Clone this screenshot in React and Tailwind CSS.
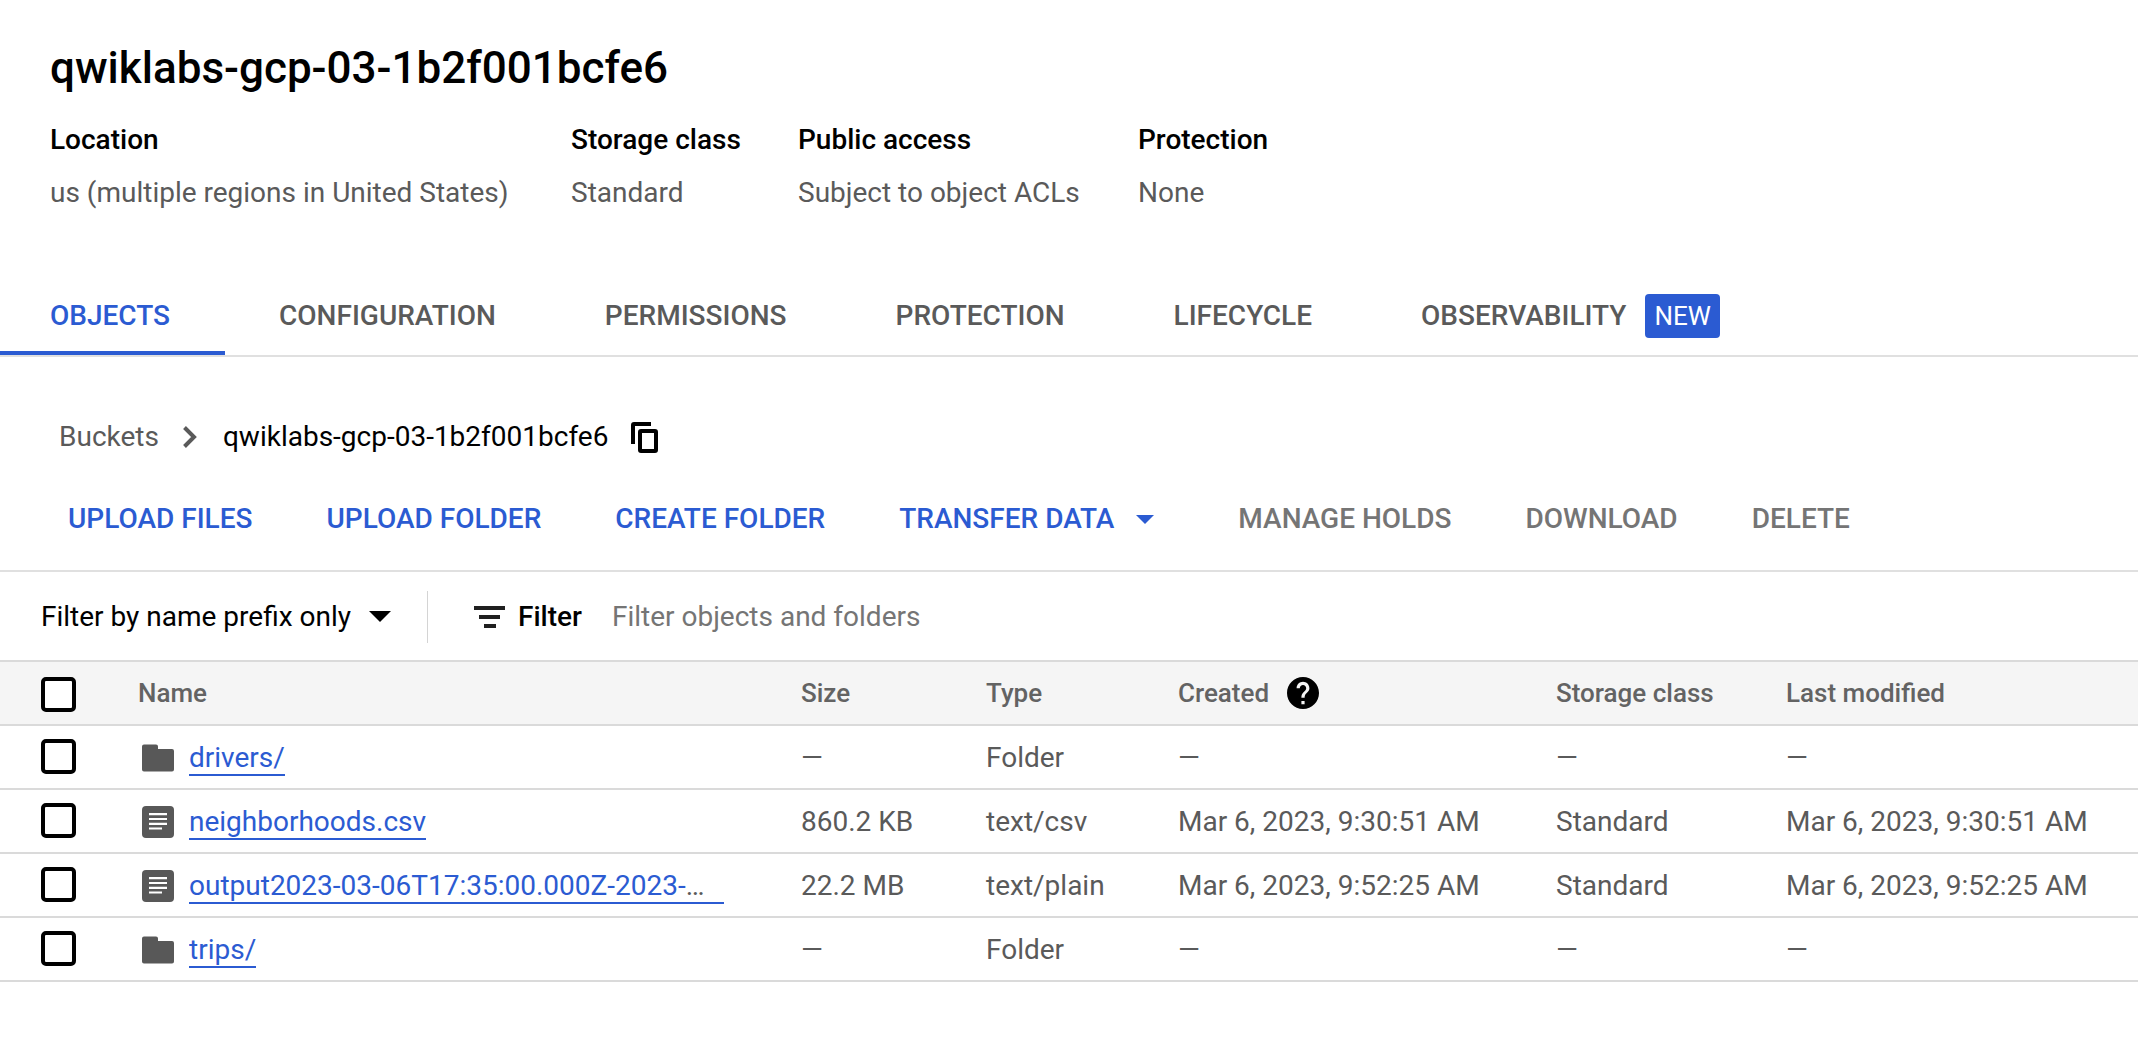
const details = [
  { label: 'Location', value: 'us (multiple regions in United States)' },
  { label: 'Storage class', value: 'Standard' },
  { label: 'Public access', value: 'Subject to object ACLs' },
  { label: 'Protection', value: 'None' },
];

const tabs = ['OBJECTS', 'CONFIGURATION', 'PERMISSIONS', 'PROTECTION', 'LIFECYCLE'];

const rows = [
  { name: 'drivers/', folder: true, size: '—', type: 'Folder', created: '—', storage: '—', modified: '—' },
  { name: 'neighborhoods.csv', size: '860.2 KB', type: 'text/csv', created: 'Mar 6, 2023, 9:30:51 AM', storage: 'Standard', modified: 'Mar 6, 2023, 9:30:51 AM' },
  { name: 'output2023-03-06T17:35:00.000Z-2023-', shortened: true, size: '22.2 MB', type: 'text/plain', created: 'Mar 6, 2023, 9:52:25 AM', storage: 'Standard', modified: 'Mar 6, 2023, 9:52:25 AM' },
  { name: 'trips/', folder: true, size: '—', type: 'Folder', created: '—', storage: '—', modified: '—' },
];

function FolderIcon() {
  return (
    <svg className="h-8 w-8 shrink-0" viewBox="0 0 32 32" fill="#585858" aria-hidden="true">
      <path d="M2 2.500H14a2 2 0 0 1 2 2V7H30a2 2 0 0 1 2 2V27.500a2 2 0 0 1-2 2H2a2 2 0 0 1-2-2V4.500a2 2 0 0 1 2-2z" />
    </svg>
  );
}

function FileIcon() {
  return (
    <svg className="h-8 w-8 shrink-0" viewBox="0 0 32 32" aria-hidden="true">
      <rect width="32" height="32" rx="4" fill="#585858" />
      <path d="M7 8.200h18M7 13h18M7 17.800h18M7 22.500h13" stroke="#fff" strokeWidth="2.200" />
    </svg>
  );
}

function CheckBox({ label }) {
  return (
    <input
      type="checkbox"
      aria-label={label}
      className="block h-[35px] w-[35px] appearance-none rounded-[5px] border-4 border-black bg-white checked:bg-black"
    />
  );
}

function Action({ children, disabled }) {
  return (
    <button
      type="button"
      disabled={disabled}
      className="flex items-center font-medium text-[#2b5bd2] disabled:text-[#757575]"
    >
      {children}
    </button>
  );
}

export default function App() {
  return (
    <main className="min-h-screen bg-white font-['Roboto',sans-serif] text-[28px] leading-9 whitespace-nowrap text-[#5a5a5a]">
      <header className="px-[50px] pt-10">
        <h1 className="text-[44px] leading-[56px] font-medium text-black">qwiklabs-gcp-03-1b2f001bcfe6</h1>
        <dl className="mt-[26px] grid grid-cols-[521px_227px_340px_auto]">
          {details.map((d) => (
            <div key={d.label}>
              <dt className="font-medium text-black">{d.label}</dt>
              <dd className="mt-[17px]">{d.value}</dd>
            </div>
          ))}
        </dl>
      </header>

      <nav className="mt-[66px] flex h-[80px] border-b-2 border-[#e0e0e0] font-medium">
        {tabs.map((t, i) => (
          <a
            key={t}
            href="#"
            className={
              i === 0
                ? 'flex items-center border-b-4 border-[#2b5bd2] pt-1 pr-[55px] pl-[50px] text-[#2b5bd2]'
                : 'flex items-center pr-[55px] pl-[54px]'
            }
          >
            {t}
          </a>
        ))}
        <a href="#" className="flex items-center pr-[55px] pl-[54px]">
          OBSERVABILITY
          <span className="ml-[19px] rounded bg-[#2b5bd2] px-[9px] py-1 text-[26px] font-normal text-white">NEW</span>
        </a>
      </nav>

      <div className="mt-[62px] flex items-center pl-[59px]">
        <a href="#">Buckets</a>
        <svg className="mx-6 h-6 w-4" viewBox="0 0 16 24" fill="none" stroke="#5a5a5a" strokeWidth="4" aria-hidden="true">
          <path d="M1.500 2.500l9.500 9.500-9.500 9.500" />
        </svg>
        <span className="text-black">qwiklabs-gcp-03-1b2f001bcfe6</span>
        <button type="button" aria-label="Copy bucket name" className="ml-[23px]">
          <svg className="h-[31px] w-[27px]" viewBox="0 0 27 31" fill="none" stroke="#000" strokeWidth="4" aria-hidden="true">
            <path d="M2 22V3a1 1 0 0 1 1-1H20" />
            <rect x="9" y="9" width="16" height="20" rx="1" />
          </svg>
        </button>
      </div>

      <div className="mt-[46px] flex gap-[74px] border-b-2 border-[#e0e0e0] pb-[33px] pl-[68px]">
        <Action>UPLOAD FILES</Action>
        <Action>UPLOAD FOLDER</Action>
        <Action>CREATE FOLDER</Action>
        <Action>
          TRANSFER DATA
          <svg className="mr-[10px] ml-[22px] h-[9px] w-[18px]" viewBox="0 0 18 9" fill="currentColor" aria-hidden="true">
            <path d="M0 0h18L9 9z" />
          </svg>
        </Action>
        <Action disabled>MANAGE HOLDS</Action>
        <Action disabled>DOWNLOAD</Action>
        <Action disabled>DELETE</Action>
      </div>

      <div className="flex h-[88px] items-center pt-0.5 pl-[41px]">
        <div className="relative">
          <select aria-label="Filter mode" className="block appearance-none bg-transparent pr-10 text-black">
            <option>Filter by name prefix only</option>
          </select>
          <svg className="pointer-events-none absolute top-3 right-0 h-[11px] w-[22px]" viewBox="0 0 22 11" fill="#000" aria-hidden="true">
            <path d="M0 0h22L11 11z" />
          </svg>
        </div>
        <div className="ml-9 h-[52px] border-l border-[#d4d4d4]" />
        <svg className="ml-[46px] h-[22px] w-[31px]" viewBox="0 0 31 22" fill="#202020" aria-hidden="true">
          <path d="M0 0h31v4H0zM5 9h21v4H5zM10 18h12v4H10z" />
        </svg>
        <label htmlFor="filter" className="ml-[13px] font-medium text-black">Filter</label>
        <input
          id="filter"
          type="text"
          placeholder="Filter objects and folders"
          className="ml-[30px] min-w-0 flex-1 outline-none placeholder:text-[#757575]"
        />
      </div>

      <table className="w-full table-fixed border-collapse text-left">
        <colgroup>
          <col className="w-[138px]" />
          <col />
          <col className="w-[185px]" />
          <col className="w-[192px]" />
          <col className="w-[378px]" />
          <col className="w-[230px]" />
          <col className="w-[352px]" />
        </colgroup>
        <thead>
          <tr className="h-16 border-y-2 border-[#dadada] bg-[#f5f5f5] text-[26px] text-[#636363] [&>th]:p-0 [&>th]:font-medium">
            <th className="pt-[3px]! pl-[41px]!"><CheckBox label="Select all objects" /></th>
            <th>Name</th>
            <th>Size</th>
            <th>Type</th>
            <th>
              <div className="flex items-center">
                Created
                <button type="button" aria-label="About the created time" className="ml-[18px]">
                  <svg className="h-8 w-8" viewBox="2 2 20 20" aria-hidden="true">
                    <path d="M12 2C6.480 2 2 6.480 2 12s4.480 10 10 10 10-4.480 10-10S17.520 2 12 2zm1 17h-2v-2h2v2zm2.070-7.750l-.9.920C13.450 12.900 13 13.500 13 15h-2v-.5c0-1.100.450-2.100 1.170-2.830l1.240-1.260c.370-.360.590-.860.590-1.410 0-1.100-.9-2-2-2s-2 .9-2 2H8c0-2.210 1.790-4 4-4s4 1.790 4 4c0 .880-.360 1.680-.930 2.250z" />
                  </svg>
                </button>
              </div>
            </th>
            <th>Storage class</th>
            <th>Last modified</th>
          </tr>
        </thead>
        <tbody>
          {rows.map((r) => (
            <tr key={r.name} className="h-16 border-b-2 border-[#dadada] [&>td]:p-0 [&>td]:pt-0.5">
              <td className="pt-0! pb-px! pl-[41px]!"><CheckBox label={'Select ' + r.name} /></td>
              <td>
                <div className="flex items-center pr-16 pl-1">
                  {r.folder ? <FolderIcon /> : <FileIcon />}
                  <div className="ml-[15px] min-w-0 truncate leading-10">
                    <a
                      href="#"
                      className={
                        r.shortened
                          ? 'border-b-2 border-[#2b5bd2] pr-5 text-[#2b5bd2]'
                          : 'border-b-2 border-[#2b5bd2] text-[#2b5bd2]'
                      }
                    >
                      {r.name}
                      {r.shortened && <span className="text-[#5a5a5a]">…</span>}
                    </a>
                  </div>
                </div>
              </td>
              <td>{r.size}</td>
              <td>{r.type}</td>
              <td>{r.created}</td>
              <td>{r.storage}</td>
              <td>{r.modified}</td>
            </tr>
          ))}
        </tbody>
      </table>
    </main>
  );
}
